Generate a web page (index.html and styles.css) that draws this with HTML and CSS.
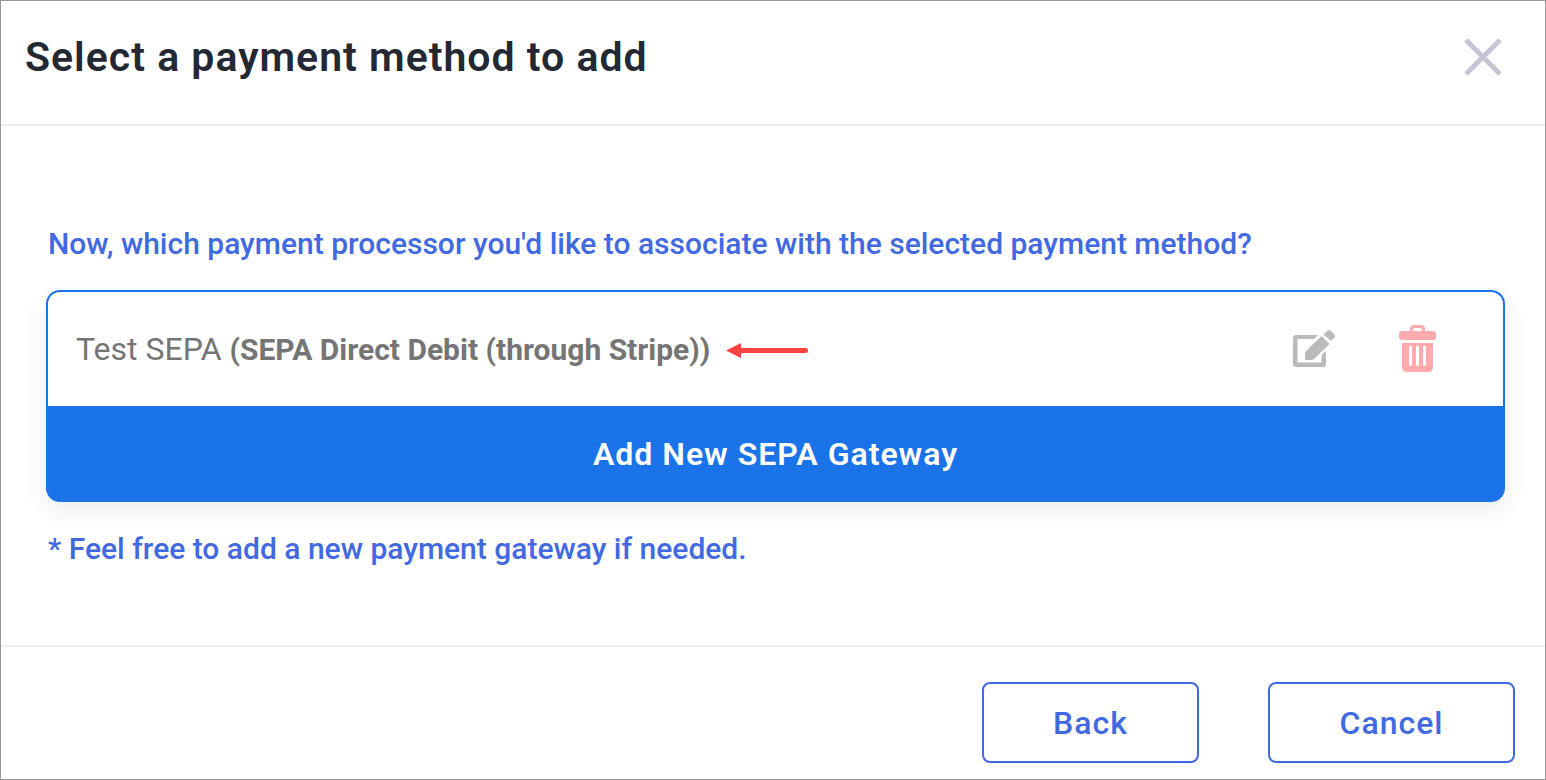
FILE: index.html
```
<!DOCTYPE html>
<html lang="en">
<head>
<meta charset="utf-8">
<title>Select a payment method to add</title>
<link rel="stylesheet" href="styles.css">
</head>
<body>
<section class="modal" aria-labelledby="title">
  <header class="modal-header">
    <h1 class="modal-title" id="title">Select a payment method to add</h1>
    <button class="icon-button" type="button" aria-label="Close">
      <svg class="close-icon" viewBox="0 0 38 38"><path d="M2 2 36 36M36 2 2 36" fill="none" stroke="#c5c6d4" stroke-width="5"/></svg>
    </button>
  </header>
  <main class="modal-body">
    <p class="hint">Now, which payment processor you'd like to associate with the selected payment method?</p>
    <div class="gateways">
      <div class="gateway">
        <span class="gateway-name">Test SEPA <b>(SEPA Direct Debit (through Stripe))</b></span>
        <svg class="arrow" viewBox="0 0 82 18"><path d="M12 10.500H79.500" stroke="#ff4141" stroke-width="5" stroke-linecap="round"/><path d="M0 10.500 15 3V18Z" fill="#ff4141"/></svg>
        <div class="actions">
          <button class="icon-button" type="button" aria-label="Edit">
            <svg class="edit-icon" viewBox="0 0 42 38"><path fill="#bababa" fill-rule="evenodd" d="M3 5H25L21 9H4.500V32.500H28.500V25L33 21V34Q33 37 30 37H3Q0 37 0 34V8Q0 5 3 5Z"/><path fill="#bababa" d="M29 6.500 36 13.500Q36.500 14 36 14.500L21 29Q20 30 18 30H13Q12 30 12 29V24Q12 22 13 21L28 6.500Q28.500 6 29 6.500ZM31 4 34 1Q36 -.5 38 1L41 4Q43 6 41 8L38.500 10.500Q38 11 37.500 10.500L31 5Q30.500 4.500 31 4Z"/></svg>
          </button>
          <button class="icon-button" type="button" aria-label="Delete">
            <svg class="trash-icon" viewBox="0 0 38 48"><path fill="#ffabad" fill-rule="evenodd" d="M3 6H11V4Q11 0 15 0H22Q26 0 26 4V6H34Q37 6 37 9V12Q37 15 34 15H3Q0 15 0 12V9Q0 6 3 6ZM14 6H23V5Q23 3 21 3H16Q14 3 14 5ZM3 18H34V42Q34 47 29 47H8Q3 47 3 42ZM10 22V39.500a1.500 1.500 0 0 0 3 0V22a1.500 1.500 0 0 0-3 0ZM17 22V39.500a1.500 1.500 0 0 0 3 0V22a1.500 1.500 0 0 0-3 0ZM24 22V39.500a1.500 1.500 0 0 0 3 0V22a1.500 1.500 0 0 0-3 0Z"/></svg>
          </button>
        </div>
      </div>
      <button class="add-button" type="button">Add New SEPA Gateway</button>
    </div>
    <p class="hint">* Feel free to add a new payment gateway if needed.</p>
  </main>
  <footer class="modal-footer">
    <button class="button" type="button">Back</button>
    <button class="button button-wide" type="button">Cancel</button>
  </footer>
</section>
</body>
</html>
```
FILE: styles.css
```
* { box-sizing: border-box; }
body { margin: 0; font-family: Roboto, sans-serif; background: #fff; }
svg { display: block; }
button { font: inherit; cursor: pointer; }
.modal { display: flex; flex-direction: column; min-height: 100vh; border: 1px solid #999; }
.modal-header { display: flex; align-items: center; justify-content: space-between; padding: 31px 43px 42px 24px; border-bottom: 2px solid #eee; }
.modal-title { margin: 0; font-size: 41px; line-height: 50px; font-weight: 600; letter-spacing: 1px; color: #242832; }
.icon-button { padding: 0; border: 0; background: none; }
.close-icon { width: 38px; height: 38px; }
.modal-body { flex: 1; padding: 98px 40px 60px 45px; }
.hint { margin: 0; padding-left: 2px; font-size: 30px; line-height: 40px; font-weight: 500; color: #4169e1; }
.gateways { margin: 26px 0 27px; border-radius: 14px; box-shadow: 0 8px 24px rgba(0, 0, 0, .08); }
.gateway { display: flex; align-items: center; height: 116px; padding: 0 66px 0 28px; border: 2px solid #1a73e8; border-bottom: 0; border-radius: 14px 14px 0 0; }
.gateway-name { font-size: 32px; line-height: 40px; color: #757575; }
.gateway-name b { font-size: 30px; font-weight: 700; }
.arrow { width: 82px; height: 18px; margin-left: 16px; }
.actions { display: flex; align-items: center; gap: 64px; margin-left: auto; }
.edit-icon { width: 42px; height: 38px; }
.trash-icon { width: 38px; height: 48px; }
.add-button { display: block; width: 100%; height: 96px; padding: 0; border: 0; border-radius: 0 0 14px 14px; background: #1a73e8; color: #fff; font-size: 32px; font-weight: 600; letter-spacing: 1px; }
.modal-footer { display: flex; justify-content: flex-end; gap: 69px; padding: 35px 30px 16px; border-top: 2px solid #eee; }
.button { width: 217px; height: 81px; border: 2px solid #4169e1; border-radius: 8px; background: #fff; color: #4169e1; font-size: 32px; font-weight: 500; letter-spacing: 1px; }
.button-wide { width: 247px; }
```
